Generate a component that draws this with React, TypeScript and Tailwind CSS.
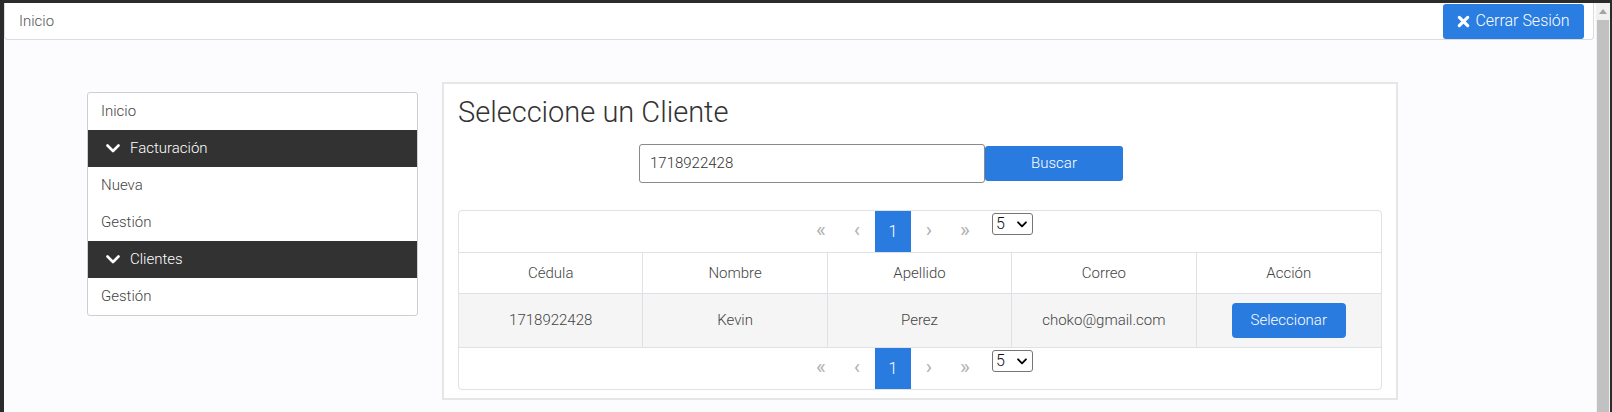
import React from 'react'

const font = { fontFamily: 'Roboto, "Liberation Sans", sans-serif' }

function ChevronDown({ className }: { className?: string }) {
  return (
    <svg viewBox="0 0 14 9" className={className} fill="none">
      <path d="M1.5 1.5 L7 7 L12.5 1.5" stroke="currentColor" strokeWidth="2.6" strokeLinecap="round" strokeLinejoin="round" />
    </svg>
  )
}

function TimesIcon({ className }: { className?: string }) {
  return (
    <svg viewBox="0 0 14 14" className={className} fill="none">
      <path d="M2.5 2.5 L11.5 11.5 M11.5 2.5 L2.5 11.5" stroke="currentColor" strokeWidth="3.4" strokeLinecap="round" />
    </svg>
  )
}

function Pager({ border }: { border: 'top' | 'bottom' }) {
  const cls = border === 'bottom' ? 'border-b border-[#dee2e6]' : 'border-t border-[#dee2e6]'
  return (
    <div className={'flex h-[42px] justify-center pr-[4px] ' + cls}>
      <div className="flex h-full items-center justify-center w-[36px] pb-[2px] text-[#b0b0b0] text-[21px]">«</div>
      <div className="flex h-full items-center justify-center w-[36px] pb-[2px] text-[#b0b0b0] text-[21px]">‹</div>
      <div className="flex h-full items-center justify-center w-[36px] bg-[#2a7be0] text-white text-[16px] font-light">1</div>
      <div className="flex h-full items-center justify-center w-[36px] pb-[2px] text-[#b0b0b0] text-[21px]">›</div>
      <div className="flex h-full items-center justify-center w-[36px] pb-[2px] text-[#b0b0b0] text-[21px]">»</div>
      <div className="ml-[9px] mt-[2px] flex h-[22px] w-[41px] items-center justify-between rounded-[3px] border border-[#767676] bg-white pl-[3px] pr-[5px] text-[16px] font-light text-[#111]">
        <span>5</span>
        <ChevronDown className="h-[7px] w-[10px] text-black" />
      </div>
    </div>
  )
}

export default function App() {
  const menu = [
    { label: 'Inicio', dark: false },
    { label: 'Facturación', dark: true },
    { label: 'Nueva', dark: false },
    { label: 'Gestión', dark: false },
    { label: 'Clientes', dark: true },
    { label: 'Gestión', dark: false },
  ]
  const cols = ['Cédula', 'Nombre', 'Apellido', 'Correo', 'Acción']

  return (
    <div className="flex h-[412px] w-[1612px] flex-col overflow-hidden bg-[#2b2b2b]" style={font}>
      <div className="h-[3px] shrink-0" />
      <div className="flex min-h-0 flex-1">
        <div className="w-[4px] shrink-0" />
        <div className="flex w-[1592px] flex-col bg-[#fcfbfd]">
          <div className="flex h-[37px] w-[1590px] items-center justify-between rounded-b-[4px] border border-t-0 border-[#dcdcdc] bg-white pl-[14px] pr-[9px]">
            <span className="text-[15px] font-light text-[#555]">Inicio</span>
            <button className="flex h-[35px] w-[141px] items-center justify-center gap-[5px] rounded-[3px] bg-[#2a7de1] text-[16px] font-light text-white">
              <TimesIcon className="h-[13px] w-[13px]" />
              <span>Cerrar Sesión</span>
            </button>
          </div>

          <div className="mt-[42px] flex items-start pl-[83px]">
            <div className="mt-[10px] w-[331px] overflow-hidden rounded-[3px] border border-[#cfcfcf] bg-white">
              {menu.map((m, i) =>
                m.dark ? (
                  <div key={i} className="flex h-[37px] items-center gap-[10px] bg-[#323232] pl-[18px] text-[15px] font-light text-white">
                    <ChevronDown className="h-[9px] w-[14px] text-white" />
                    <span>{m.label}</span>
                  </div>
                ) : (
                  <div key={i} className="flex h-[37px] items-center pl-[13px] text-[15px] font-light text-[#444]">
                    {m.label}
                  </div>
                )
              )}
            </div>

            <div className="ml-[24px] w-[956px] border-2 border-[#e6e6e6] bg-white px-[14px] pb-[8px] pt-[10px]">
              <h3 className="text-[29px] font-light leading-[36px] text-[#333]">Seleccione un Cliente</h3>
              <div className="mt-[14px] ml-[181px] flex items-center">
                <div className="flex h-[39px] w-[346px] items-center rounded-[3px] border border-[#8a8a8a] bg-white pl-[10px] text-[15px] font-light text-[#333]">
                  1718922428
                </div>
                <button className="h-[35px] w-[138px] rounded-[3px] bg-[#2a7be0] text-[15px] font-light text-white">Buscar</button>
              </div>

              <div className="mt-[27px] overflow-hidden rounded-[4px] border border-[#dee2e6]">
                <Pager border="bottom" />
                <div className="grid h-[41px] grid-cols-5 border-b border-[#dee2e6] bg-white">
                  {cols.map((c, i) => (
                    <div key={c} className={'flex items-center justify-center text-[15px] font-light text-[#444] ' + (i < 4 ? 'border-r border-[#dee2e6]' : '')}>
                      {c}
                    </div>
                  ))}
                </div>
                <div className="grid h-[53px] grid-cols-5 bg-[#f5f5f5] text-[15px] font-light text-[#444]">
                  <div className="flex items-center justify-center border-r border-[#dee2e6]">1718922428</div>
                  <div className="flex items-center justify-center border-r border-[#dee2e6]">Kevin</div>
                  <div className="flex items-center justify-center border-r border-[#dee2e6]">Perez</div>
                  <div className="flex items-center justify-center border-r border-[#dee2e6]">choko@gmail.com</div>
                  <div className="flex items-center justify-center">
                    <button className="h-[35px] w-[114px] rounded-[4px] bg-[#2a7be0] text-[15px] text-white">Seleccionar</button>
                  </div>
                </div>
                <Pager border="top" />
              </div>
            </div>
          </div>
        </div>
        <div className="flex w-[14px] shrink-0 flex-col bg-[#f1f1f1]">
          <div className="flex h-[17px] items-center justify-center">
            <div className="h-0 w-0 border-x-[4px] border-b-[5px] border-x-transparent border-b-[#a3a3a3]" />
          </div>
          <div className="mx-[1px] flex-1 bg-[#c1c1c1]" />
        </div>
        <div className="w-[2px] shrink-0" />
      </div>
    </div>
  )
}
